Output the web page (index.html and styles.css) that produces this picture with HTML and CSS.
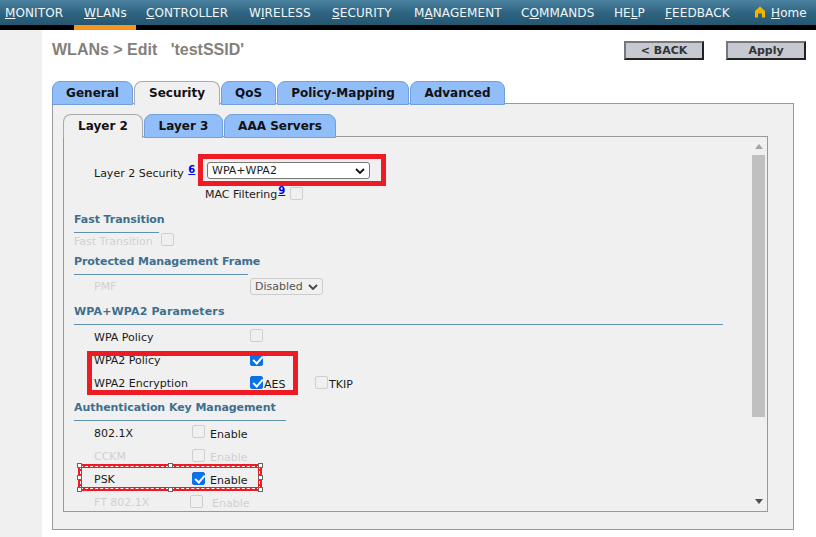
FILE: index.html
```html
<!DOCTYPE html>
<html lang="en">
<head>
<meta charset="utf-8">
<title>WLANs &gt; Edit</title>
<link rel="stylesheet" href="styles.css">
</head>
<body>
<nav class="nav">
  <a class="item m-monitor"><u>M</u>ONITOR</a>
  <a class="item m-wlans current"><u>W</u>LANs</a>
  <a class="item m-controller"><u>C</u>ONTROLLER</a>
  <a class="item m-wireless">W<u>I</u>RELESS</a>
  <a class="item m-security"><u>S</u>ECURITY</a>
  <a class="item m-management">M<u>A</u>NAGEMENT</a>
  <a class="item m-commands">C<u>O</u>MMANDS</a>
  <a class="item m-help">HE<u>L</u>P</a>
  <a class="item m-feedback"><u>F</u>EEDBACK</a>
  <a class="item m-home">
    <svg class="home-icon" viewBox="0 0 12 12" aria-hidden="true"><path d="M6 .5 11 5v6.500H8V7.500H4v4H1V5z" fill="#f5b400"/></svg>
    <span><u>H</u>ome</span>
  </a>
</nav>
<div class="page">
  <aside class="side"></aside>
  <main class="main">
    <header class="head">
      <h1 class="title">WLANs &gt; Edit &nbsp; 'testSSID'</h1>
      <div class="actions">
        <button class="btn">&lt; BACK</button>
        <button class="btn">Apply</button>
      </div>
    </header>
    <div class="tabs">
      <span class="tab t-general">General</span>
      <span class="tab active t-security">Security</span>
      <span class="tab t-qos">QoS</span>
      <span class="tab t-policy">Policy-Mapping</span>
      <span class="tab t-advanced">Advanced</span>
    </div>
    <section class="outer">
      <div class="tabs sub">
        <span class="tab active t-l2">Layer 2</span>
        <span class="tab t-l3">Layer 3</span>
        <span class="tab t-aaa">AAA Servers</span>
      </div>
      <div class="inner">
        <div class="form">
          <div class="row r-l2">
            <span class="lab">Layer 2 Security <a class="sup">6</a></span>
            <span class="fake-select sel-l2">WPA+WPA2<svg class="chev" viewBox="0 0 10 6"><path d="M1 1l4 4 4-4" fill="none" stroke="#111" stroke-width="1.800"/></svg></span>
          </div>
          <div class="row r-mac">
            <span class="mac">MAC Filtering<a class="sup">9</a></span><i class="cb"></i>
          </div>
          <h2 class="sec s-ft">Fast Transition</h2>
          <div class="row r-ft"><span class="dis ft-lab">Fast Transition</span><i class="cb"></i></div>
          <h2 class="sec s-pmf">Protected Management Frame</h2>
          <div class="row r-pmf"><span class="lab w-156 dis">PMF</span>
            <span class="fake-select sel-pmf">Disabled<svg class="chev" viewBox="0 0 10 6"><path d="M1 1l4 4 4-4" fill="none" stroke="#444" stroke-width="1.800"/></svg></span></div>
          <h2 class="sec s-wpa">WPA+WPA2 Parameters</h2>
          <div class="row r-p1"><span class="lab w-156">WPA Policy</span><i class="cb"></i></div>
          <div class="row r-p2"><span class="lab w-156">WPA2 Policy</span><i class="cb on"></i></div>
          <div class="row r-p3"><span class="lab w-156">WPA2 Encryption</span><i class="cb on"></i><span class="low aes">AES</span><i class="cb"></i><span class="low tkip">TKIP</span></div>
          <h2 class="sec s-akm">Authentication Key Management</h2>
          <div class="row r-a1"><span class="lab w-98">802.1X</span><i class="cb"></i><span class="low en">Enable</span></div>
          <div class="row r-a2"><span class="lab w-98 dis">CCKM</span><i class="cb"></i><span class="low en dis">Enable</span></div>
          <div class="row r-a3"><span class="lab w-98">PSK</span><i class="cb on"></i><span class="low en">Enable</span></div>
          <div class="row r-a4"><span class="lab w-96 dis">FT 802.1X</span><i class="cb"></i><span class="low en2 dis">Enable</span></div>
        </div>
        <div class="scroll">
          <svg class="arr" viewBox="0 0 8 5"><path d="M4 0l4 5H0z" fill="#a3a3a3"/></svg>
          <div class="thumb"></div>
          <svg class="arr dn" viewBox="0 0 8 5"><path d="M0 0h8L4 5z" fill="#505050"/></svg>
        </div>
      </div>
    </section>
  </main>
</div>
<div class="mark mark-a"></div>
<div class="mark mark-b"></div>
<div class="mark mark-c">
  <b class="h h1"></b><b class="h h2"></b><b class="h h3"></b><b class="h h4"></b><b class="h h5"></b><b class="h h6"></b><b class="h h7"></b><b class="h h8"></b>
</div>
</body>
</html>
```
FILE: styles.css
```css
* { box-sizing: border-box; }
html, body { margin: 0; padding: 0; }
body { width: 816px; height: 537px; overflow: hidden; position: relative; background: #fff; font-family: "DejaVu Sans", Verdana, sans-serif; font-size: 11px; color: #1a1a1a; }

.nav { height: 30px; display: flex; background: linear-gradient(#4b83a1 0, #2f6480 13px, #255670 25px, #000 25px, #000 30px); color: #fff; font-size: 12px; letter-spacing: .1px; }
.item { height: 30px; padding-top: 6px; line-height: 15px; white-space: nowrap; color: #f2f6f8; }
.m-monitor { padding-left: 5px; width: 74px; }
.m-wlans { padding-left: 10px; width: 62px; }
.m-wlans.current { background: linear-gradient(transparent 25px, #f7941d 25px); }
.m-controller { padding-left: 10px; width: 103px; }
.m-wireless { padding-left: 10px; width: 83px; }
.m-security { padding-left: 10px; width: 82px; }
.m-management { padding-left: 10px; width: 107px; }
.m-commands { padding-left: 10px; width: 93px; }
.m-help { padding-left: 10px; width: 51px; }
.m-feedback { padding-left: 10px; width: 90px; }
.m-home { display: flex; gap: 5px; padding-left: 9px; }
.home-icon { width: 12px; height: 12px; margin-top: 0; }

.page { display: flex; height: 507px; }
.side { width: 42px; background: #f0f0f0; }
.main { flex: 1; padding: 0 22px 0 10px; }

.head { display: flex; justify-content: space-between; height: 51px; padding-top: 11px; }
.title { margin: 0; font: bold 16px/18px "Liberation Sans", Arial, sans-serif; color: #857f7a; white-space: pre; }
.actions { display: flex; gap: 22px; margin-right: -12px; height: 19px; }
.btn { width: 80px; height: 19px; padding: 0; background: #c6c8d2; border: 2px solid; border-color: #777 #222 #222 #777; font: bold 11px/15px "DejaVu Sans", sans-serif; color: #333; }

.tabs { display: flex; gap: 1px; height: 22px; position: relative; z-index: 1; }
.tab { height: 24px; border: 1px solid #6f9fdc; border-bottom-width: 1px; border-radius: 8px 8px 0 0; background: #91bdf9; font: bold 12px/23px "DejaVu Sans", sans-serif; color: #111; text-align: center; }
.tab.active { background: #f0f0f0; border-color: #aaa; border-bottom: 0; }
.t-general { width: 81px; } .t-security { width: 86px; } .t-qos { width: 55px; } .t-policy { width: 132px; } .t-advanced { width: 95px; }
.sub { height: 22px; padding-left: 0; }
.t-l2 { width: 80px; } .t-l3 { width: 79px; } .t-aaa { width: 112px; }

.outer { width: 742px; height: 427px; background: #f0f0f0; border: 1px solid #999; padding: 10px 25px 0 10px; }
.inner { position: relative; height: 376px; margin-top: 0; border: 1px solid #999; background: #f0f0f0; display: flex; overflow: hidden; }
.form { width: 687px; padding: 0 0 0 10px; }
.scroll { width: 15px; display: flex; flex-direction: column; align-items: center; padding-top: 7px; }
.arr { width: 8px; height: 5px; flex: none; }
.thumb { width: 13px; height: 262px; margin-top: 6px; background: #c0c0c0; }
.dn { margin-top: 82px; }

.row { display: flex; align-items: center; height: 23px; white-space: nowrap; }
.lab { padding-left: 20px; flex: none; }
.w-156 { width: 176px; } .w-98 { width: 118px; } .w-96 { width: 116px; }
.dis { color: #d0d0d0; }
.sup { color: #00e; font-weight: bold; text-decoration: underline; font-size: 10px; vertical-align: 4px; margin-left: 1px; }
.cb { display: block; flex: none; width: 13px; height: 13px; border: 1px solid #cfcfcf; border-radius: 2px; background: #f0f0f0; position: relative; margin-top: -3px; }
.cb.on { background: #0a72e8; border-color: #0a72e8; }
.cb.on::after { content: ""; position: absolute; left: 3.500px; top: .5px; width: 4px; height: 8px; border: solid #fff; border-width: 0 2px 2px 0; transform: rotate(42deg); }
.low { margin-top: 2px; }

.r-l2 { height: 24px; margin-top: 23px; }
.r-l2 .lab { width: 133px; }
.fake-select { display: flex; align-items: center; justify-content: space-between; flex: none; height: 17px; background: #fff; border: 1px solid #777; border-radius: 3px; padding: 0 4px; }
.sel-l2 { width: 163px; margin-top: -3px; }
.sel-pmf { width: 73px; background: #f0f0f0; border-color: #ccc; color: #555; }
.chev { width: 10px; height: 6px; flex: none; }
.r-mac { height: 18px; padding-left: 131px; }
.r-mac .cb { margin-top: 0; }
.mac { margin-right: 5px; }
.sec { margin: 0; font: bold 11px/14px "DejaVu Sans", sans-serif; color: #3e6f8e; height: 20px; border-bottom: 1px solid #5f92ae; white-space: nowrap; letter-spacing: -.07px; }
.s-ft { width: 85px; margin-top: 11px; }
.r-ft { height: 16px; } .ft-lab { margin-right: 8px; }
.s-pmf { width: 174px; margin-top: 6px; }
.r-pmf { height: 23px; }
.s-wpa { width: 649px; margin-top: 7px; letter-spacing: .15px; }
.r-p1 { height: 24px; }
.aes { margin-left: 1px; width: 51px; }
.tkip { margin-left: 1px; }
.s-akm { width: 212px; margin-top: 6px; }
.r-a1 { height: 24px; }
.en { margin-left: 5px; }
.en2 { margin-left: 9px; }

.mark { position: absolute; border: 5px solid #ed1c24; pointer-events: none; }
.mark-a { left: 198px; top: 154px; width: 188px; height: 32px; }
.mark-b { left: 87px; top: 351px; width: 211px; height: 44px; }
.mark-c { left: 78px; top: 464px; width: 184px; height: 27px; border-width: 4px; outline: 1px dashed #fff; outline-offset: -3px; }
.h { position: absolute; width: 5px; height: 5px; background: #fff; border: 1px solid #666; }
.h1 { left: -5px; top: -5px; } .h2 { left: 86px; top: -5px; } .h3 { right: -5px; top: -5px; }
.h4 { left: -5px; top: 7px; } .h5 { right: -5px; top: 7px; }
.h6 { left: -5px; bottom: -5px; } .h7 { left: 86px; bottom: -5px; } .h8 { right: -5px; bottom: -5px; }
```
